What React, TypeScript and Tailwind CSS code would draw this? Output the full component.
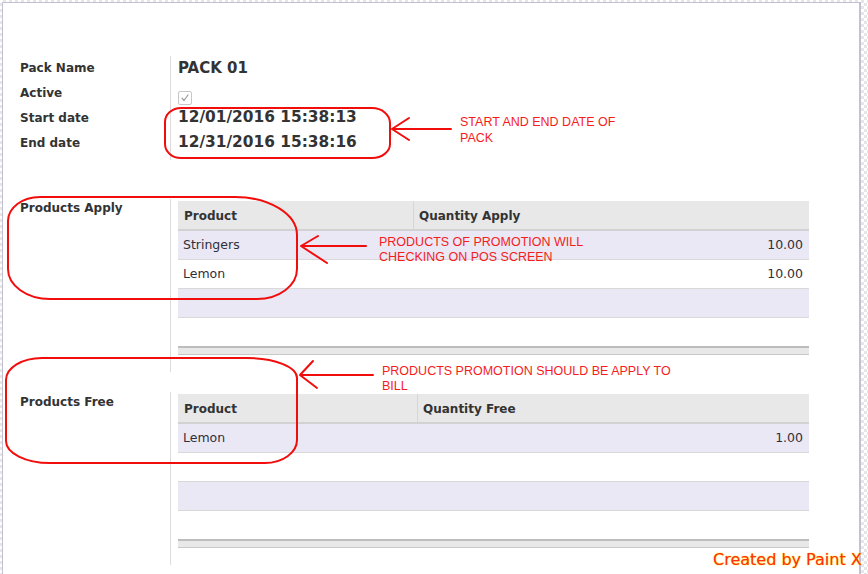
import React from "react";

type Corner = [number, number];

function roundedPath(
  x1: number,
  y1: number,
  x2: number,
  y2: number,
  tl: Corner,
  tr: Corner,
  br: Corner,
  bl: Corner
) {
  return [
    `M ${x1 + tl[0]} ${y1}`,
    `L ${x2 - tr[0]} ${y1}`,
    `A ${tr[0]} ${tr[1]} 0 0 1 ${x2} ${y1 + tr[1]}`,
    `L ${x2} ${y2 - br[1]}`,
    `A ${br[0]} ${br[1]} 0 0 1 ${x2 - br[0]} ${y2}`,
    `L ${x1 + bl[0]} ${y2}`,
    `A ${bl[0]} ${bl[1]} 0 0 1 ${x1} ${y2 - bl[1]}`,
    `L ${x1} ${y1 + tl[1]}`,
    `A ${tl[0]} ${tl[1]} 0 0 1 ${x1 + tl[0]} ${y1}`,
    "Z",
  ].join(" ");
}

function FieldRow({
  label,
  h,
  children,
  valueClass = "items-center",
}: {
  label: string;
  h: string;
  children: React.ReactNode;
  valueClass?: string;
}) {
  return (
    <div className={`flex ${h}`}>
      <div className="w-[150px] flex items-center text-[12px] font-bold text-[#333]">{label}</div>
      <div className={`flex-1 flex border-l border-[#dcdcdc] pl-[7px] ${valueClass}`}>{children}</div>
    </div>
  );
}

type Line = { name: string; qty: string };

function OneTable({
  col1W,
  qtyLabel,
  rows,
}: {
  col1W: string;
  qtyLabel: string;
  rows: Line[];
}) {
  const all: (Line | null)[] = [...rows];
  while (all.length < 3) all.push(null);
  return (
    <div className="w-[631px] text-[12.5px] text-[#2f2f38]">
      <div className="flex h-[30px] bg-[#e8e8e8] border-b-2 border-[#d2d2d2] font-bold text-[12px] text-[#333]">
        <div className={`${col1W} flex items-center pl-[6px] pt-[1px] border-r border-[#d6d6d6]`}>Product</div>
        <div className="flex-1 flex items-center pl-[5px] pt-[1px]">{qtyLabel}</div>
      </div>
      {all.map((r, i) => (
        <div
          key={i}
          className={`flex items-center h-[29px] pt-[1px] border-b border-[#d9d9d9] ${i % 2 === 0 ? "bg-[#eae8f5]" : "bg-white"}`}
        >
          <div className="flex-1 pl-[5px]">{r ? r.name : ""}</div>
          <div className="pr-[6px]">{r ? r.qty : ""}</div>
        </div>
      ))}
      <div className="h-[28px]" />
      <div className="h-[9px] bg-[#e8e8e8] border-t-2 border-[#bdbdbd] border-b border-b-[#c8c8c8]" />
    </div>
  );
}

export default function App() {
  const red = "#f20d0d";
  return (
    <div
      className="relative w-[868px] h-[574px] overflow-hidden bg-[repeating-conic-gradient(#e6e6e6_0_25%,#ffffff_0_50%)] bg-[length:6px_6px]"
      style={{ fontFamily: '"DejaVu Sans", sans-serif' }}
    >
      <div className="ml-[2px] mt-[2px] w-[859px] h-[572px] bg-white border-l border-t border-r-2 border-[#c4c0d3] pt-[53px] pl-[17px]">
        {/* Group 1 */}
        <div className="flex flex-col">
          <FieldRow label="Pack Name" h="h-[24px]">
            <span className="text-[15px] font-bold text-[#333]">PACK 01</span>
          </FieldRow>
          <FieldRow label="Active" h="h-[25px]" valueClass="items-start pt-[11px]">
            <span className="w-[14px] h-[14px] rounded-[2px] border border-[#c8c8c8] bg-white flex items-center justify-center">
              <svg width="10" height="10" viewBox="0 0 10 10" fill="none" stroke="#9a9a9a" strokeWidth="1.2" strokeLinecap="round" strokeLinejoin="round">
                <path d="M2 5.2 L4 7.5 L8 2" />
              </svg>
            </span>
          </FieldRow>
          <FieldRow label="Start date" h="h-[25px]">
            <span className="text-[15.4px] font-bold text-[#333]">12/01/2016 15:38:13</span>
          </FieldRow>
          <FieldRow label="End date" h="h-[26px]">
            <span className="text-[15.4px] font-bold text-[#333]">12/31/2016 15:38:16</span>
          </FieldRow>
          <div className="flex h-[4px]">
            <div className="w-[150px]" />
            <div className="flex-1 border-l border-[#dcdcdc]" />
          </div>
        </div>

        {/* Group 2 */}
        <div className="flex mt-[39px]">
          <div className="w-[150px] pt-[1px] leading-[16px] text-[12px] font-bold text-[#333]">Products Apply</div>
          <div className="flex-1 border-l border-[#dcdcdc] pl-[7px] pt-[2px] pb-[17px]">
            <OneTable
              col1W="w-[236px]"
              qtyLabel="Quantity Apply"
              rows={[
                { name: "Stringers", qty: "10.00" },
                { name: "Lemon", qty: "10.00" },
              ]}
            />
          </div>
        </div>

        {/* Group 3 */}
        <div className="flex mt-[20px]">
          <div className="w-[150px] pt-[2px] leading-[16px] text-[12px] font-bold text-[#333]">Products Free</div>
          <div className="flex-1 border-l border-[#dcdcdc] pl-[7px] pt-[2px] pb-[17px]">
            <OneTable col1W="w-[240px]" qtyLabel="Quantity Free" rows={[{ name: "Lemon", qty: "1.00" }]} />
          </div>
        </div>
      </div>

      {/* Annotation overlay */}
      <svg
        className="absolute left-0 top-0 pointer-events-none"
        width="868"
        height="574"
        viewBox="0 0 868 574"
        fill="none"
        stroke={red}
        strokeWidth="2"
        strokeLinecap="round"
        strokeLinejoin="round"
      >
        <path d={roundedPath(165, 108, 390, 158, [16, 14], [18, 15], [18, 14], [16, 14])} />
        <path d={roundedPath(8, 197, 297, 299, [32, 24], [62, 38], [40, 30], [42, 30])} />
        <path d={roundedPath(6, 358, 297, 463, [36, 22], [50, 20], [32, 23], [44, 22])} />

        <path d="M392 129 L451 129 M392 129 L409 118 M392 129 L409 140" />
        <path d="M301 246 L366 246 M301 246 L318 236 M301 246 L327 263" />
        <path d="M300 375 L373 375 M300 375 L313 361 M300 375 L317 388" />
      </svg>

      <div
        className="absolute left-[460px] top-[114px] text-[12.5px] leading-[16px] text-[#f51c1c]"
        style={{ fontFamily: '"Liberation Sans", Arial, sans-serif' }}
      >
        START AND END DATE OF
        <br />
        PACK
      </div>
      <div
        className="absolute left-[379px] top-[235px] text-[12.5px] leading-[15px] text-[#f51c1c]"
        style={{ fontFamily: '"Liberation Sans", Arial, sans-serif' }}
      >
        PRODUCTS OF PROMOTION WILL
        <br />
        CHECKING ON POS SCREEN
      </div>
      <div
        className="absolute left-[382px] top-[364px] text-[12.5px] leading-[15px] text-[#f51c1c]"
        style={{ fontFamily: '"Liberation Sans", Arial, sans-serif' }}
      >
        PRODUCTS PROMOTION SHOULD BE APPLY TO
        <br />
        BILL
      </div>

      <div className="absolute left-[713px] top-[550px] text-[16px] leading-[20px] text-[#ff2f1c] [text-shadow:0_0_1px_#ffe100,0_0_1px_#ffe100]">
        Created by Paint X
      </div>
    </div>
  );
}
